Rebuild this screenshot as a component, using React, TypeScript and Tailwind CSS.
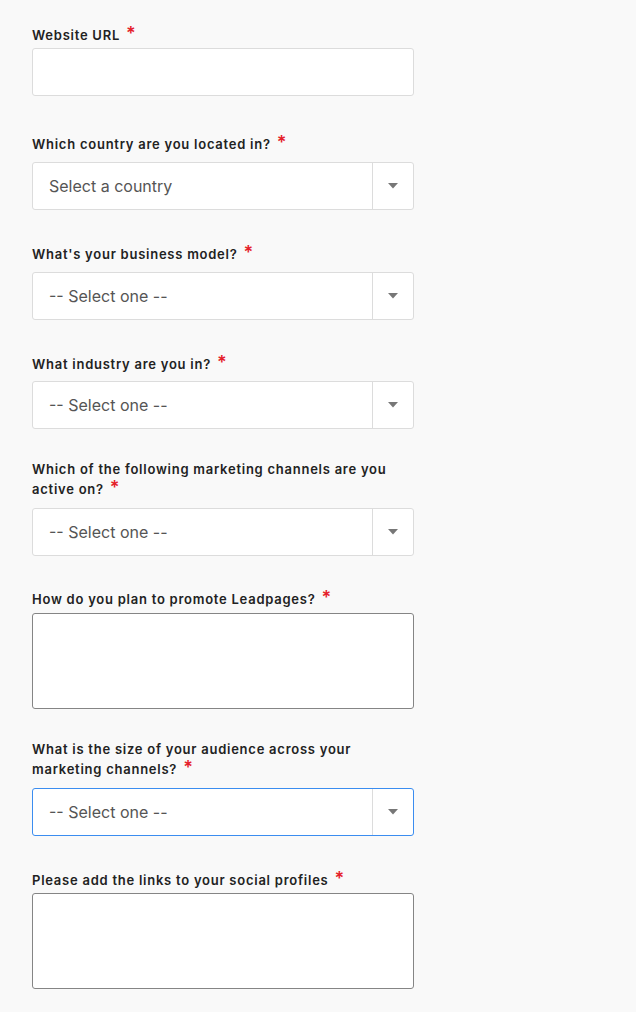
import type { ReactNode } from 'react';

type Field =
  | { kind: 'input'; label: ReactNode; mt: string; gap: string }
  | { kind: 'select'; label: ReactNode; mt: string; gap: string; placeholder: string; focused?: boolean }
  | { kind: 'textarea'; label: ReactNode; mt: string; gap: string };

const FIELDS: Field[] = [
  { kind: 'input', label: 'Website URL', mt: 'mt-0', gap: 'mt-[3px]' },
  { kind: 'select', label: 'Which country are you located in?', mt: 'mt-[37px]', gap: 'mt-[8px]', placeholder: 'Select a country' },
  { kind: 'select', label: "What's your business model?", mt: 'mt-[33px]', gap: 'mt-[8px]', placeholder: '-- Select one --' },
  { kind: 'select', label: 'What industry are you in?', mt: 'mt-[33px]', gap: 'mt-[7px]', placeholder: '-- Select one --' },
  { kind: 'select', label: 'Which of the following marketing channels are you active on?', mt: 'mt-[29px]', gap: 'mt-[9px]', placeholder: '-- Select one --' },
  { kind: 'textarea', label: 'How do you plan to promote Leadpages?', mt: 'mt-[32px]', gap: 'mt-[4px]' },
  { kind: 'select', label: 'What is the size of your audience across your marketing channels?', mt: 'mt-[29px]', gap: 'mt-[9px]', placeholder: '-- Select one --', focused: true },
  { kind: 'textarea', label: 'Please add the links to your social profiles', mt: 'mt-[33px]', gap: 'mt-[3px]' },
];

function Label({ children }: { children: ReactNode }) {
  return (
    <label className="block pr-6 pt-px text-[13px] leading-5 font-semibold text-[#222] tracking-[0.75px]">
      {children}
      <span className="ml-[6px] text-[18px] leading-[0] font-semibold text-[#e5202a]">*</span>
    </label>
  );
}

function Select({ placeholder, focused }: { placeholder: string; focused?: boolean }) {
  return (
    <div
      className={
        'flex h-12 rounded-[3px] border bg-white ' +
        (focused ? 'border-[#3b8df0]' : 'border-[#dcdcdc]')
      }
    >
      <div className="flex-1 flex items-center pl-4 text-base text-[#555]">{placeholder}</div>
      <div className="w-[41px] border-l border-[#dcdcdc] flex items-center justify-center">
        <svg width="10" height="6" viewBox="0 0 10 6">
          <path d="M0 0h10L5 5.5z" fill="#777" />
        </svg>
      </div>
    </div>
  );
}

export default function App() {
  return (
    <div
      className="min-h-[1012px] bg-[#f9f9f9] pt-6 pl-8"
      style={{ fontFamily: 'Inter, "Noto Sans", sans-serif' }}
    >
      <div className="w-[382px]">
        {FIELDS.map((f, i) => (
          <div key={i} className={f.mt}>
            <Label>{f.label}</Label>
            {f.kind === 'input' && (
              <div className={f.gap + ' h-12 rounded-[3px] border border-[#dcdcdc] bg-white'} />
            )}
            {f.kind === 'select' && (
              <div className={f.gap}>
                <Select placeholder={f.placeholder} focused={f.focused} />
              </div>
            )}
            {f.kind === 'textarea' && (
              <div className={f.gap + ' h-24 rounded-[3px] border border-[#858585] bg-white'} />
            )}
          </div>
        ))}
      </div>
    </div>
  );
}
